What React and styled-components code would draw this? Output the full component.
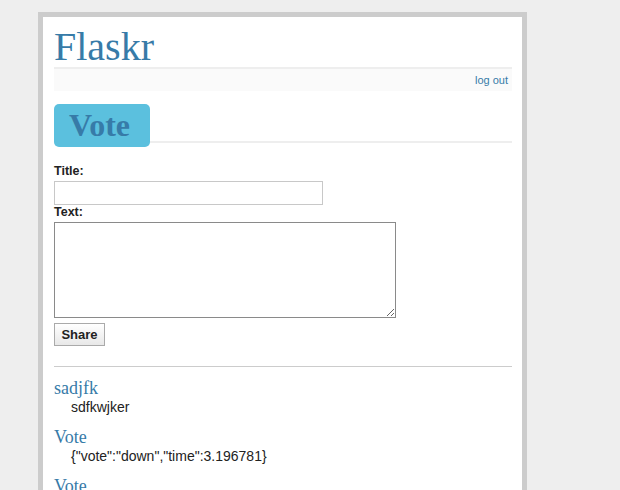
import React from "react";
import styled, { createGlobalStyle } from "styled-components";

const GlobalStyle = createGlobalStyle`
  body {
    margin: 0;
    background: #eee;
    font-family: "Liberation Sans", Arial, sans-serif;
    font-size: 13px;
    color: #222;
  }
`;

const entries = [
  { title: "sadjfk", text: "sdfkwjker" },
  { title: "Vote", text: '{"vote":"down","time":3.196781}' },
  { title: "Vote", text: '{"vote":"up","time":2.104311}' },
];

function App() {
  return (
    <>
      <GlobalStyle />
      <Page>
        <Title>Flaskr</Title>
        <MetaNav>
          <NavLink href="#">log out</NavLink>
        </MetaNav>
        <SectionHead>
          <Badge>Vote</Badge>
        </SectionHead>
        <AddEntry>
          <Label>Title:</Label>
          <TitleInput type="text" />
          <Label>Text:</Label>
          <TextArea />
          <ShareButton>Share</ShareButton>
        </AddEntry>
        <Entries>
          {entries.map((e, i) => (
            <Entry key={i}>
              <EntryTitle>{e.title}</EntryTitle>
              <EntryText>{e.text}</EntryText>
            </Entry>
          ))}
        </Entries>
      </Page>
    </>
  );
}

export default App;

const Page = styled.div`
  margin: 12px 0 0 38px;
  width: 458px;
  padding: 10px 10px 20px 11px;
  border: 5px solid #ccc;
  background: white;
`;

const Title = styled.h1`
  margin: 0;
  font-family: "Liberation Serif", Georgia, serif;
  font-weight: normal;
  font-size: 40px;
  line-height: 40px;
  color: #377ba8;
  border-bottom: 2px solid #eee;
`;

const MetaNav = styled.div`
  height: 22px;
  padding: 0 4px;
  background: #fafafa;
  text-align: right;
  font-size: 11px;
  line-height: 22px;
  margin-bottom: 13px;
`;

const NavLink = styled.a`
  color: #377ba8;
  text-decoration: none;
`;

const SectionHead = styled.div`
  display: flex;
  height: 37px;
  border-bottom: 2px solid #eee;
`;

const Badge = styled.h2`
  margin: 0;
  width: 96px;
  height: 43px;
  box-sizing: border-box;
  padding-left: 15px;
  background: #5bc0de;
  border-radius: 5px;
  font-family: "Liberation Serif", Georgia, serif;
  font-weight: bold;
  font-size: 32px;
  line-height: 43px;
  color: #377ba8;
  position: relative;
  z-index: 1;
`;

const AddEntry = styled.form`
  display: flex;
  flex-direction: column;
  align-items: flex-start;
  padding-top: 21px;
  padding-bottom: 20px;
  border-bottom: 1px solid #ccc;
`;

const Label = styled.label`
  font-size: 12.5px;
  font-weight: bold;
  line-height: 15px;
`;

const TitleInput = styled.input`
  width: 269px;
  height: 24px;
  box-sizing: border-box;
  margin: 2px 0 0;
  border: 1px solid #c8c8c8;
  padding: 2px 4px;
`;

const TextArea = styled.textarea`
  width: 342px;
  height: 96px;
  box-sizing: border-box;
  margin: 2px 0 0;
  border: 1px solid #8a8a8a;
  padding: 2px;
  resize: both;
`;

const ShareButton = styled.button`
  margin-top: 5px;
  width: 51px;
  height: 23px;
  box-sizing: border-box;
  padding: 0;
  border: 1px solid #aaa;
  background: linear-gradient(#fff, #e8e8e8);
  font-family: "Liberation Sans", Arial, sans-serif;
  font-size: 13px;
  font-weight: bold;
  color: #222;
`;

const Entries = styled.ul`
  list-style: none;
  margin: 0;
  padding: 0;
`;

const Entry = styled.li`
  margin: 11px 0 12px 17px;
`;

const EntryTitle = styled.h2`
  margin: 0 0 0 -17px;
  font-family: "Liberation Serif", Georgia, serif;
  font-weight: normal;
  font-size: 18px;
  line-height: 21px;
  color: #377ba8;
`;

const EntryText = styled.div`
  font-size: 14px;
  line-height: 16px;
`;
